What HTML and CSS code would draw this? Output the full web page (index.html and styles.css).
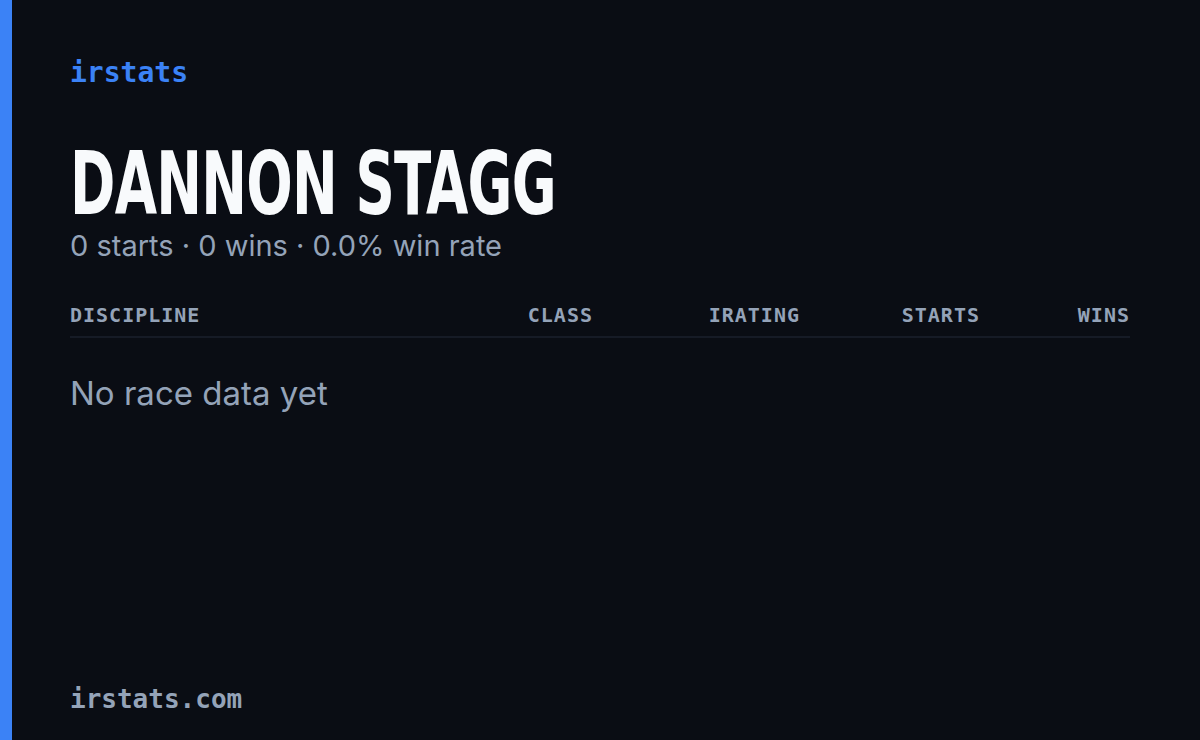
FILE: index.html
```html
<!DOCTYPE html>
<html lang="en">
<head>
    <meta charset="UTF-8">
    <meta name="viewport" content="width=device-width, initial-scale=1.0">
    <title>Dannon Stagg - irstats</title>
    <link rel="stylesheet" href="styles.css">
</head>
<body>
    <div class="card">
        <div class="brand">irstats</div>

        <div class="driver">
            <h1 class="driver-name">DANNON STAGG</h1>
            <div class="driver-summary">0 starts · 0 wins · 0.0% win rate</div>
        </div>

        <div class="table">
            <div class="table-head">
                <div class="col">Discipline</div>
                <div class="col num">Class</div>
                <div class="col num">iRating</div>
                <div class="col num">Starts</div>
                <div class="col num">Wins</div>
            </div>
            <div class="empty">No race data yet</div>
        </div>

        <div class="footer">irstats.com</div>
    </div>
</body>
</html>
```

FILE: styles.css
```css
* {
    margin: 0;
    padding: 0;
    box-sizing: border-box;
}

body {
    background: #0a0d14;
    font-family: Inter, 'Noto Sans', sans-serif;
    height: 100vh;
    overflow: hidden;
}

.card {
    height: 100%;
    border-left: 12px solid #3b82f6;
    padding: 56px 70px 26px 58px;
    display: flex;
    flex-direction: column;
}

.brand {
    font-family: 'DejaVu Sans Mono', monospace;
    font-size: 28px;
    font-weight: 700;
    color: #3b82f6;
    line-height: 34px;
}

.driver {
    margin-top: 50px;
}

.driver-name {
    font-family: 'DejaVu Sans Condensed', sans-serif;
    font-stretch: condensed;
    font-size: 88px;
    font-weight: 700;
    color: #f8fafc;
    line-height: 88px;
    letter-spacing: -1px;
    transform: scaleX(0.69);
    transform-origin: left center;
}

.driver-summary {
    font-size: 29px;
    color: #94a3b8;
    line-height: 36px;
}

.table {
    margin-top: 39px;
}

.table-head {
    display: grid;
    grid-template-columns: 1fr 160px 207px 180px 150px;
    padding-bottom: 9px;
    border-bottom: 2px solid #161b26;
}

.col {
    font-family: 'DejaVu Sans Mono', monospace;
    font-size: 20px;
    font-weight: 700;
    letter-spacing: 1px;
    text-transform: uppercase;
    color: #94a3b8;
    line-height: 24px;
}

.col.num {
    text-align: right;
}

.empty {
    margin-top: 35px;
    font-size: 33px;
    color: #94a3b8;
    line-height: 40px;
}

.footer {
    margin-top: auto;
    font-family: 'DejaVu Sans Mono', monospace;
    font-size: 26px;
    font-weight: 700;
    color: #94a3b8;
    line-height: 30px;
}
```
